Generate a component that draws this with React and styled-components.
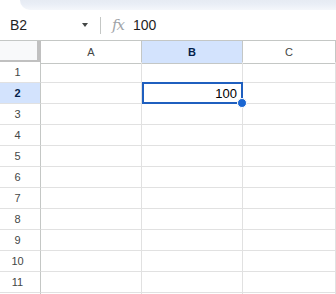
import React from "react";
import styled, { createGlobalStyle } from "styled-components";

const GlobalStyle = createGlobalStyle`
  html, body {
    margin: 0;
    padding: 0;
    background: #ffffff;
    overflow: hidden;
  }
  body {
    font-family: "Liberation Sans", Arial, sans-serif;
  }
`;

const Page = styled.div`
  width: 336px;
  height: 294px;
  overflow: hidden;
  background: #fff;
`;

const TopStrip = styled.div`
  height: 10px;
  padding-left: 20px;
`;

const TopBand = styled.div`
  height: 100%;
  border-bottom-left-radius: 10px;
  background: linear-gradient(#e6ebf3 0, #e9eef6 40%, #f4f7fb 100%);
`;

const FormulaBar = styled.div`
  height: 30px;
  display: flex;
  align-items: center;
  border-bottom: 1px solid #c4c7c5;
  color: #1f1f1f;
  font-size: 14px;
`;

const NameBox = styled.div`
  width: 82px;
  padding-left: 10px;
  box-sizing: border-box;
`;

const Caret = styled.div`
  width: 0;
  height: 0;
  border-left: 3.5px solid transparent;
  border-right: 3.5px solid transparent;
  border-top: 4px solid #444746;
`;

const Divider = styled.div`
  width: 1px;
  height: 17px;
  background: #c4c7c5;
  margin-left: 12px;
`;

const Fx = styled.span`
  margin-left: 11px;
  font-family: "DejaVu Serif", "Liberation Serif", serif;
  font-style: italic;
  font-size: 15px;
  color: #a0a4a8;
  letter-spacing: -1px;
`;

const FormulaValue = styled.span`
  margin-left: 9px;
`;

const Grid = styled.div`
  display: grid;
  grid-template-columns: 41px 101px 101px 1fr;
  grid-auto-rows: 21px;
  font-size: 11px;
  color: #444746;
`;

const Corner = styled.div`
  height: 23px;
  box-sizing: border-box;
  background: #f8f9fa;
  border-right: 4px solid #c0c0c0;
  border-bottom: 4px solid #c0c0c0;
`;

const ColHeader = styled.div`
  height: 23px;
  box-sizing: border-box;
  display: flex;
  align-items: center;
  justify-content: center;
  border-right: 1px solid #c4c7c5;
  border-bottom: 1px solid #c4c7c5;
  background: ${(p) => (p.$active ? "#d3e3fd" : "#fff")};
  color: ${(p) => (p.$active ? "#041e49" : "#444746")};
  font-weight: ${(p) => (p.$active ? "bold" : "normal")};
`;

const RowHeader = styled.div`
  box-sizing: border-box;
  display: flex;
  align-items: center;
  justify-content: center;
  padding-right: 5px;
  border-right: 1px solid #c4c7c5;
  border-bottom: 1px solid #e1e1e1;
  background: ${(p) => (p.$active ? "#d3e3fd" : "#fff")};
  color: ${(p) => (p.$active ? "#041e49" : "#444746")};
  font-weight: ${(p) => (p.$active ? "bold" : "normal")};
  font-size: 11px;
`;

const Cell = styled.div`
  position: relative;
  box-sizing: border-box;
  display: flex;
  align-items: flex-end;
  justify-content: flex-end;
  padding: 0 5px 2px 0;
  border-right: 1px solid #e1e1e1;
  border-bottom: 1px solid #e1e1e1;
  font-size: 13px;
  color: #000;
  z-index: ${(p) => (p.$selected ? 2 : "auto")};
`;

const Selection = styled.div`
  position: absolute;
  top: -1px;
  left: 0;
  right: -1px;
  bottom: -1px;
  border: 2px solid #1f5fbf;
  pointer-events: none;
`;

const Handle = styled.div`
  position: absolute;
  right: -6px;
  bottom: -6px;
  width: 8px;
  height: 8px;
  border-radius: 50%;
  background: #1a66d2;
  border: 1px solid #fff;
`;

const columns = ["A", "B", "C"];
const rows = Array.from({ length: 12 }, (_, i) => i + 1);

export default function App() {
  return (
    <Page>
      <GlobalStyle />
      <TopStrip>
        <TopBand />
      </TopStrip>
      <FormulaBar>
        <NameBox>B2</NameBox>
        <Caret />
        <Divider />
        <Fx>fx</Fx>
        <FormulaValue>100</FormulaValue>
      </FormulaBar>
      <Grid>
        <Corner />
        {columns.map((c) => (
          <ColHeader key={c} $active={c === "B"}>
            {c}
          </ColHeader>
        ))}
        {rows.map((r) => (
          <React.Fragment key={r}>
            <RowHeader $active={r === 2}>{r}</RowHeader>
            {columns.map((c) => {
              const selected = r === 2 && c === "B";
              return (
                <Cell key={c} $selected={selected}>
                  {selected && "100"}
                  {selected && (
                    <Selection>
                      <Handle />
                    </Selection>
                  )}
                </Cell>
              );
            })}
          </React.Fragment>
        ))}
      </Grid>
    </Page>
  );
}
